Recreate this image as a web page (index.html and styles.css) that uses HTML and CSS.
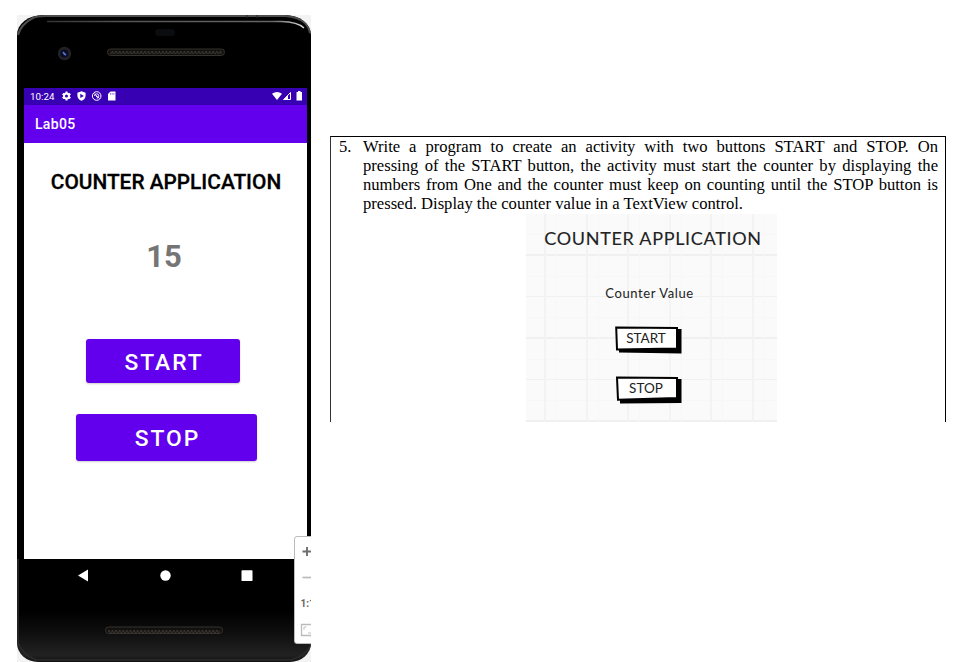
FILE: index.html
```html
<!DOCTYPE html>
<html lang="en">
<head>
<meta charset="utf-8">
<title>Counter Application</title>
<link rel="stylesheet" href="styles.css">
</head>
<body>
<main class="page">
  <section class="emulator">
    <div class="phone">
      <div class="phone-top">
        <svg width="294" height="73" viewBox="0 0 294 73">
          <defs>
            <pattern id="mesh" width="3.6" height="5" patternUnits="userSpaceOnUse"><path d="M0 4L2 1M2 1L3 4" stroke="#49443d" stroke-width=".8" fill="none"/></pattern>
            <linearGradient id="shine"><stop offset="0" stop-color="#333"/><stop offset=".3" stop-color="#555"/><stop offset=".88" stop-color="#666"/><stop offset="1" stop-color="#ddd"/></linearGradient>
          </defs>
          <path d="M1 20Q4 9 16 3Q20 1 28 1H268Q282 2 288 8Q292 12 293 18" fill="none" stroke="#4c4e4d" stroke-width="2"/>
          <path d="M30 6.5H264Q281 7 287 13" fill="none" stroke="url(#shine)" stroke-width="1.3"/>
          <path d="M230 0V3M240 0V3" stroke="#222"/>
          <rect x="138" y="14" width="20" height="7" rx="3.5" fill="#0b0c10"/>
          <circle cx="47.5" cy="38.5" r="6.7" fill="#222126"/><circle cx="47.5" cy="38.5" r="4" fill="#0a0d22"/><path d="M46 37l1.500 2 1.500 1" stroke="#5370d8" fill="none" stroke-width="1.800"/>
          <rect x="90.500" y="34" width="117" height="6.500" rx="3.200" fill="#12110f" stroke="#35322f"/>
          <rect x="93" y="35" width="112" height="5" fill="url(#mesh)"/>
        </svg>
      </div>
      <div class="screen">
        <div class="status">
          <span class="time">10:24</span>
          <svg class="notes" width="58" height="12" viewBox="0 0 58 12">
            <circle cx="6.500" cy="6" r="2.500" fill="none" stroke="#fff" stroke-width="2"/><path d="M6.500 1.500V3M6.500 9v1.500M2.600 3.800l1.300.7M9.100 7.500l1.300.7M2.600 8.200l1.300-.7M9.100 4.500l1.300-.7" stroke="#fff" stroke-width="2"/>
            <path d="M21.500 1.200L25.600 2.700V5.500Q25.500 9.300 21.500 10.800Q17.500 9.300 17.400 5.500V2.700Z" fill="#fff"/><path d="M20.300 3.700V8.100L23.800 5.900Z" fill="#3700b3"/>
            <circle cx="36.700" cy="6" r="4.300" fill="none" stroke="#fff"/><path d="M34.500 6a2.200 2.200 0 0 1 4.400 0a2.200 2.200 0 0 1-2.200 2.200M34.300 3.500l5 5M35.700 5.700l2 2" fill="none" stroke="#fff" stroke-width=".9"/>
            <path d="M50.500 1.500H55.500V10.500H48V4Z" fill="#fff"/><path d="M50.500 3.200v1.500M52.200 3.200v1.500M53.900 3.200v1.500" stroke="#3700b3" stroke-width=".6"/>
          </svg>
          <svg class="signals" width="32" height="12" viewBox="0 0 32 12">
            <path d="M0 3.700Q5 .2 10 3.700L5 10Z" fill="#fff"/><path d="M11.800 9.500L18.500 2.500V9.500Z" fill="none" stroke="#fff"/><path d="M11 10L16 5V10Z" fill="#fff"/>
            <path d="M24.500 2H26V1H28.500V2H30V10.500H24.500Z" fill="#fff"/>
          </svg>
        </div>
        <div class="appbar">Lab05</div>
        <div class="content">
          <h1>COUNTER APPLICATION</h1>
          <div class="count">15</div>
          <button class="start">START</button>
          <button class="stop">STOP</button>
        </div>
      </div>
      <div class="phone-bottom">
        <svg width="294" height="103" viewBox="0 0 294 103">
          <path d="M61 16.500L71 10.500V22.500Z" fill="#fff"/><circle cx="148.500" cy="16.500" r="5.200" fill="#fff"/><rect x="224.500" y="11.300" width="11" height="10.800" rx=".7" fill="#fff"/>
          <rect x="88.500" y="68" width="117" height="6.500" rx="3.200" fill="#12110f" stroke="#35322f"/>
          <rect x="91" y="69" width="112" height="5" fill="url(#mesh)"/>
          <path d="M1 0V84Q6 96 19 101H274Q288 97 294 86" fill="none" stroke="#2b2b2b" stroke-width="1.500"/>
        </svg>
      </div>
    </div>
    <div class="zoom">
      <svg width="17" height="108" viewBox="0 0 17 108">
        <path d="M8.500 15.500H17M13 11V20" stroke="#6e6e6e" stroke-width="1.900"/><path d="M8.500 41.500H17" stroke="#bbb" stroke-width="1.700"/>
        <text x="6.500" y="71" class="ratio">1:1</text>
        <path d="M17 88.500H7.500V99.500H17" fill="none" stroke="#bbb" stroke-width="1.300"/><path d="M10 94V91H12.500M14 97H17" fill="none" stroke="#c4c4c4"/>
      </svg>
    </div>
  </section>
  <article class="sheet">
    <div class="question">
      <span class="num">5.</span>
      <div class="lines">
        <p>Write a program to create an activity with two buttons START and STOP. On</p>
        <p>pressing of the START button, the activity must start the counter by displaying the</p>
        <p>numbers from One and the counter must keep on counting until the STOP button is</p>
        <p class="last">pressed. Display the counter value in a TextView control.</p>
      </div>
    </div>
    <div class="sketch">
      <div class="sketch-title">COUNTER APPLICATION</div>
      <div class="sketch-value">Counter Value</div>
      <div class="sketch-button first"><svg width="68" height="29" viewBox="0 0 68 29"><path d="M4 23H63V3H66.500V27.500L4 26.500Z"/><path d="M1.200 1.400L62 2V22.500L2 23.500Z" class="face"/></svg><span>START</span></div>
      <div class="sketch-button second"><svg width="68" height="29" viewBox="0 0 68 29"><path d="M5 23H62V3H66.500V27L5 27.500Z"/><path d="M2 1.400L62 2V22L3 23.800Z" class="face"/></svg><span>STOP</span></div>
    </div>
  </article>
</main>
</body>
</html>
```
FILE: styles.css
```css
* { box-sizing: border-box; }
body { margin: 0; background: #fff; overflow: hidden; }
.page { display: flex; width: 955px; height: 662px; padding-left: 17px; }
svg { display: block; }
.emulator { position: relative; width: 294px; height: 647px; margin-top: 15px; background: #f3f3f3; overflow: hidden; flex: none; }
.phone { height: 647px; border-radius: 26px 26px 21px 21px / 20px 20px 19px 19px; background: linear-gradient(#000 0 595px, #0c0c0c 615px, #222 640px, #111 100%); overflow: hidden; }
.phone-top { height: 73px; }
.screen { width: 283px; height: 471px; margin-left: 7px; background: #fff; font-family: Roboto, sans-serif; }
.status { display: flex; align-items: center; height: 17px; padding-left: 6px; background: #3700b3; color: #fff; }
.time { width: 30px; font-size: 9.8px; line-height: 17px; }
.notes, .signals { margin-top: -1px; }
.signals { margin-left: auto; margin-right: 3px; }
.appbar { height: 38px; padding-left: 11px; background: #6200ee; color: #fff; font-size: 14px; font-weight: 500; line-height: 39px; letter-spacing: .3px; }
.content { display: flex; flex-direction: column; align-items: center; height: 416px; }
h1 { margin: 27px 0 0 1px; font-size: 20.85px; line-height: 25px; font-weight: 500; color: #000; white-space: nowrap; -webkit-text-stroke: .3px #000; }
.count { height: 37px; margin-top: 43px; margin-right: 3px; font-size: 31px; line-height: 37px; font-weight: 700; color: #757575; }
button { border: 0; border-radius: 3px; padding: 2px 0 0 2px; color: #fff; background: #6200ee; font: 500 22.8px/28px Roboto, sans-serif; letter-spacing: 2px; box-shadow: 0 1px 2px #0003; }
.start { width: 154px; height: 44px; margin: 64px 5px 0 0; padding-top: 3px; }
.stop { width: 181px; height: 47px; margin: 31px 0 0 2px; }
.phone-bottom { height: 103px; }
.zoom { position: absolute; left: 277px; top: 521px; width: 22px; height: 108px; border: 1px solid #bbb; border-radius: 3px; background: #fff; }
.zoom svg { margin: -1px; }
.ratio { font: 700 10px Roboto, sans-serif; fill: #666; }
.sheet { width: 616px; height: 286px; margin: 136px 0 0 19px; border: solid #000; border-width: 1px 1px 0; border-left-color: #333; flex: none; }
.question { display: flex; height: 77px; padding: 0 7px 0 8px; font: 16.6px/19px "Liberation Serif", serif; color: #000; }
.num { width: 24px; }
.lines { width: 575px; }
p { margin: 0; white-space: nowrap; text-align: justify; text-align-last: justify; }
p.last { text-align-last: left; }
.sketch { display: flex; flex-direction: column; align-items: center; width: 251px; height: 208px; margin-left: 195px; color: #222;
  background: repeating-linear-gradient(90deg, transparent 0 18px, #f3f3f3 18px 20px, transparent 20px 30px, #f7f7f7 30px 31px, transparent 31px 41.600px), repeating-linear-gradient(transparent 0 20px, #f7f7f7 20px 21px, transparent 21px 40.400px, #f0f0f0 40.400px 41.500px), #fafafa; }
.sketch-title { margin: 12px 0 0 3px; font: 18px/24px Lato, sans-serif; letter-spacing: .7px; white-space: nowrap; -webkit-text-stroke: .1px #222; }
.sketch-value { margin-top: 34px; margin-right: 4px; font: 13px/18px Lato, sans-serif; letter-spacing: .6px; }
.sketch-button { display: grid; width: 68px; height: 29px; margin-right: 6px; }
.first { margin-top: 24px; }
.second { margin-top: 21px; }
.sketch-button > * { grid-area: 1 / 1; }
.sketch-button span { width: 63px; text-align: center; font: 13.5px/25px Lato, sans-serif; }
.face { fill: #fff; stroke: #000; stroke-width: 2; }
```
